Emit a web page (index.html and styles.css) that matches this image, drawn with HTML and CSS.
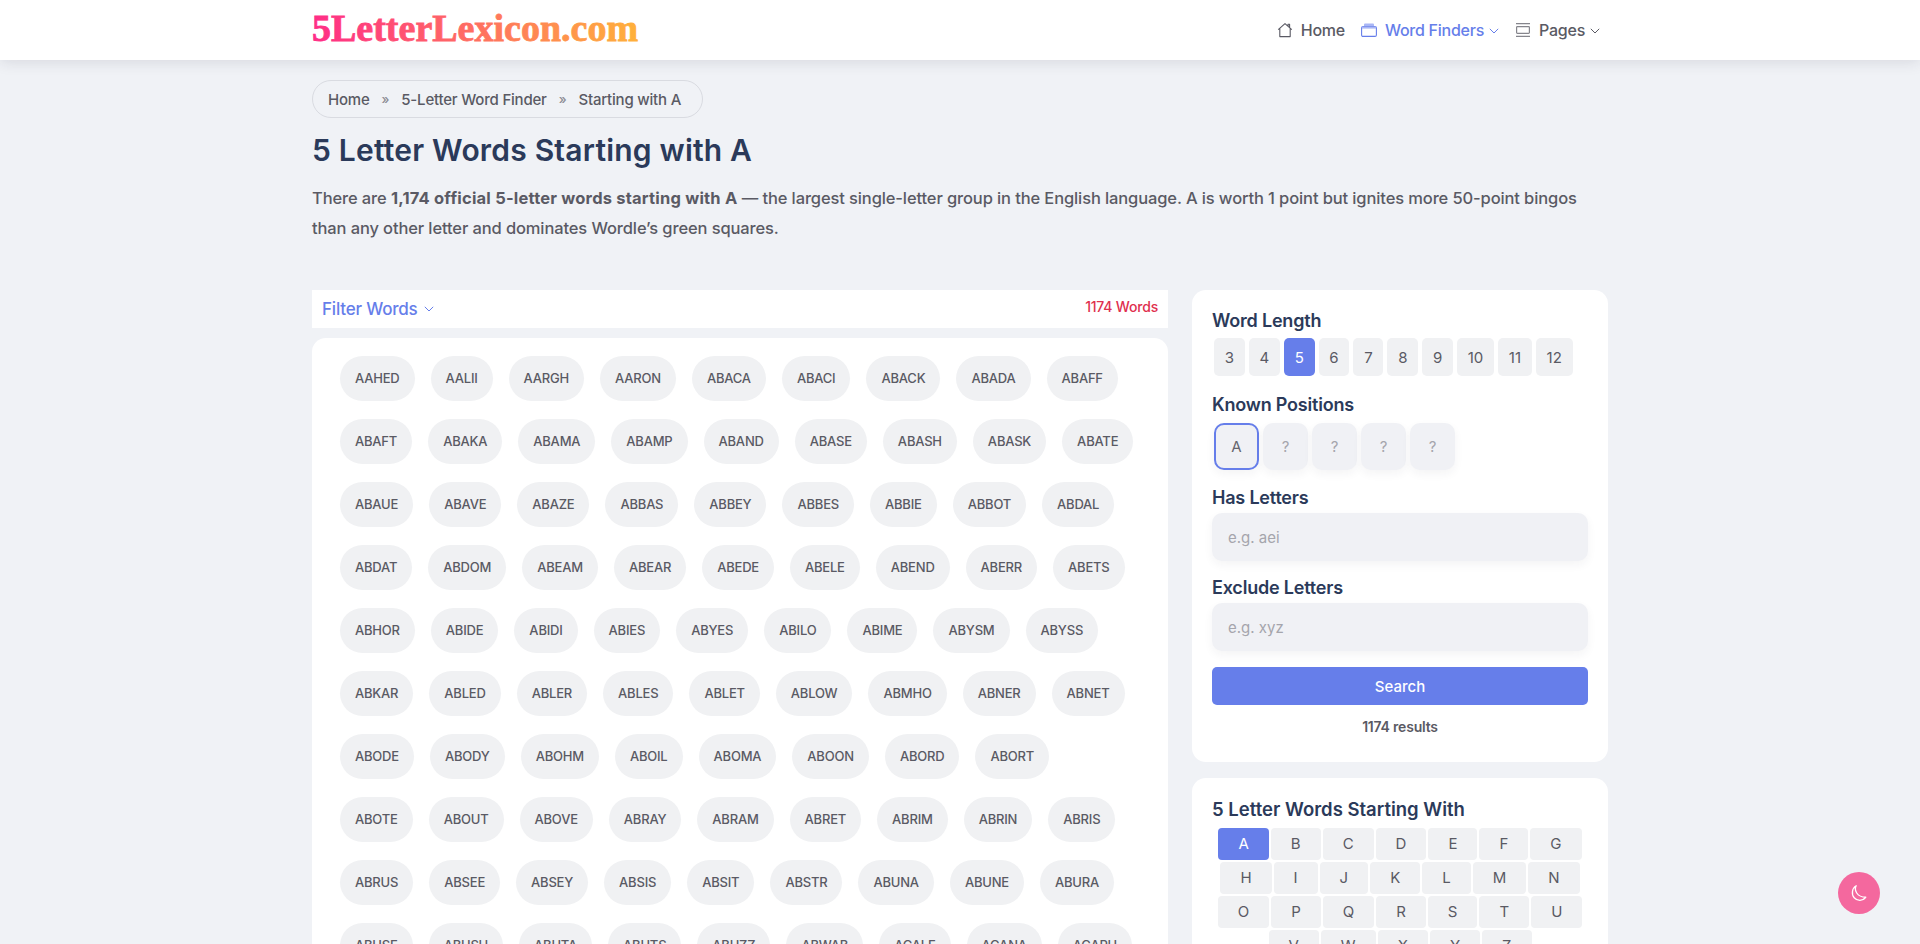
FILE: index.html
```html
<!DOCTYPE html>
<html lang="en">
<head>
    <meta charset="UTF-8">
    <meta name="viewport" content="width=device-width, initial-scale=1.0">
    <title>5 Letter Words Starting with A</title>
    <link rel="stylesheet" href="styles.css">
</head>
<body>
    <header class="site_header">
        <div class="container header_row">
            <a class="logo" href="#">
                <svg width="330" height="60">
                    <defs>
                        <linearGradient id="logoGrad" x1="0" y1="0" x2="1" y2="0">
                            <stop offset="0" stop-color="#ff2d87"/>
                            <stop offset="1" stop-color="#ffb13b"/>
                        </linearGradient>
                    </defs>
                    <text class="logo_text" x="0" y="41" fill="url(#logoGrad)" stroke="url(#logoGrad)" stroke-width="0.8">5LetterLexicon.com</text>
                </svg>
            </a>
            <nav class="main_nav">
                <a class="nav_link" href="#">
                    <svg class="nav_icon" width="16" height="16" viewBox="0 0 16 16" fill="none" stroke="currentColor" stroke-width="1.1" stroke-linejoin="round"><path d="M1.2 7.6 8 1.6l6.8 6M2.8 6.4v8.2h10.4V6.4M11 4V2.2h1.6v3.2"/></svg>
                    Home
                </a>
                <a class="nav_link active" href="#">
                    <svg class="nav_icon" width="16" height="16" viewBox="0 0 16 16" fill="none" stroke="currentColor" stroke-width="1.1"><path d="M3 4V2.400a1 1 0 0 1 1-1h8a1 1 0 0 1 1 1V4z" fill="#a9b6f5" stroke="none"/><rect x=".6" y="4.600" width="14.800" height="9.800" rx="1.400"/><path d="M1 5.600h14" stroke="#a9b6f5" stroke-width="2"/></svg>
                    Word Finders
                    <svg class="chevron" width="10" height="6" viewBox="0 0 10 6" fill="none" stroke="currentColor" stroke-width="1"><path d="M.8.8 5 5l4.200-4.200"/></svg>
                </a>
                <a class="nav_link" href="#">
                    <svg class="nav_icon" width="16" height="16" viewBox="0 0 16 16" fill="none" stroke="#85858c" stroke-width="1.200"><path d="M1 1.600h14M1 14.400h14"/><rect x="1.600" y="4.600" width="12.800" height="6.800" rx=".8"/></svg>
                    Pages
                    <svg class="chevron" width="10" height="6" viewBox="0 0 10 6" fill="none" stroke="currentColor" stroke-width="1"><path d="M.8.8 5 5l4.200-4.200"/></svg>
                </a>
            </nav>
        </div>
    </header>

    <main class="container">
        <div class="breadcrumb">
            <a href="#">Home</a><span class="sep">»</span><a href="#">5-Letter Word Finder</a><span class="sep">»</span><span>Starting with A</span>
        </div>
        <h1>5 Letter Words Starting with A</h1>
        <p class="intro">There are <strong>1,174 official 5-letter words starting with A</strong> — the largest single-letter group in the English language. A is worth 1 point but ignites more 50-point bingos than any other letter and dominates Wordle’s green squares.</p>

        <div class="content_grid">
            <section class="results">
                <div class="filter_bar">
                    <button class="filter_toggle">Filter Words
                        <svg width="10" height="6" viewBox="0 0 10 6" fill="none" stroke="currentColor" stroke-width="1"><path d="M.8.8 5 5l4.200-4.200"/></svg>
                    </button>
                    <span class="word_count">1174 Words</span>
                </div>
                <div class="word_list">
                    <a class="word">AAHED</a><a class="word">AALII</a><a class="word">AARGH</a><a class="word">AARON</a><a class="word">ABACA</a><a class="word">ABACI</a><a class="word">ABACK</a><a class="word">ABADA</a><a class="word">ABAFF</a>
                    <a class="word">ABAFT</a><a class="word">ABAKA</a><a class="word">ABAMA</a><a class="word">ABAMP</a><a class="word">ABAND</a><a class="word">ABASE</a><a class="word">ABASH</a><a class="word">ABASK</a><a class="word">ABATE</a>
                    <a class="word">ABAUE</a><a class="word">ABAVE</a><a class="word">ABAZE</a><a class="word">ABBAS</a><a class="word">ABBEY</a><a class="word">ABBES</a><a class="word">ABBIE</a><a class="word">ABBOT</a><a class="word">ABDAL</a>
                    <a class="word">ABDAT</a><a class="word">ABDOM</a><a class="word">ABEAM</a><a class="word">ABEAR</a><a class="word">ABEDE</a><a class="word">ABELE</a><a class="word">ABEND</a><a class="word">ABERR</a><a class="word">ABETS</a>
                    <a class="word">ABHOR</a><a class="word">ABIDE</a><a class="word">ABIDI</a><a class="word">ABIES</a><a class="word">ABYES</a><a class="word">ABILO</a><a class="word">ABIME</a><a class="word">ABYSM</a><a class="word">ABYSS</a>
                    <a class="word">ABKAR</a><a class="word">ABLED</a><a class="word">ABLER</a><a class="word">ABLES</a><a class="word">ABLET</a><a class="word">ABLOW</a><a class="word">ABMHO</a><a class="word">ABNER</a><a class="word">ABNET</a>
                    <a class="word">ABODE</a><a class="word">ABODY</a><a class="word">ABOHM</a><a class="word">ABOIL</a><a class="word">ABOMA</a><a class="word">ABOON</a><a class="word">ABORD</a><a class="word">ABORT</a>
                    <a class="word">ABOTE</a><a class="word">ABOUT</a><a class="word">ABOVE</a><a class="word">ABRAY</a><a class="word">ABRAM</a><a class="word">ABRET</a><a class="word">ABRIM</a><a class="word">ABRIN</a><a class="word">ABRIS</a>
                    <a class="word">ABRUS</a><a class="word">ABSEE</a><a class="word">ABSEY</a><a class="word">ABSIS</a><a class="word">ABSIT</a><a class="word">ABSTR</a><a class="word">ABUNA</a><a class="word">ABUNE</a><a class="word">ABURA</a>
                    <a class="word">ABUSE</a><a class="word">ABUSH</a><a class="word">ABUTA</a><a class="word">ABUTS</a><a class="word">ABUZZ</a><a class="word">ABWAB</a><a class="word">ACALE</a><a class="word">ACANA</a><a class="word">ACAPU</a>
                </div>
            </section>

            <aside class="sidebar">
                <div class="side_card">
                    <h3>Word Length</h3>
                    <div class="length_row">
                        <button class="length_btn">3</button><button class="length_btn">4</button><button class="length_btn active">5</button><button class="length_btn">6</button><button class="length_btn">7</button><button class="length_btn">8</button><button class="length_btn">9</button><button class="length_btn">10</button><button class="length_btn">11</button><button class="length_btn">12</button>
                    </div>
                    <h3>Known Positions</h3>
                    <div class="position_row">
                        <span class="position filled">A</span><span class="position">?</span><span class="position">?</span><span class="position">?</span><span class="position">?</span>
                    </div>
                    <h3>Has Letters</h3>
                    <input class="letter_input" type="text" placeholder="e.g. aei">
                    <h3>Exclude Letters</h3>
                    <input class="letter_input" type="text" placeholder="e.g. xyz">
                    <button class="search_btn">Search</button>
                    <p class="result_count">1174 results</p>
                </div>
                <div class="side_card">
                    <h3 class="alpha_title">5 Letter Words Starting With</h3>
                    <div class="alpha_grid">
                        <a class="alpha active">A</a><a class="alpha">B</a><a class="alpha">C</a><a class="alpha">D</a><a class="alpha">E</a><a class="alpha">F</a><a class="alpha">G</a>
                        <a class="alpha">H</a><a class="alpha">I</a><a class="alpha">J</a><a class="alpha">K</a><a class="alpha">L</a><a class="alpha">M</a><a class="alpha">N</a>
                        <a class="alpha">O</a><a class="alpha">P</a><a class="alpha">Q</a><a class="alpha">R</a><a class="alpha">S</a><a class="alpha">T</a><a class="alpha">U</a>
                        <a class="alpha">V</a><a class="alpha">W</a><a class="alpha">X</a><a class="alpha">Y</a><a class="alpha">Z</a>
                    </div>
                </div>
            </aside>
        </div>
    </main>

    <button class="theme_toggle" aria-label="Toggle theme">
        <svg width="20" height="20" viewBox="0 0 20 20" fill="none" stroke="#fff" stroke-width="1.300" stroke-linejoin="round"><path d="M7.200 2.800C5 6.800 7.600 14.200 16.800 14.200 13.800 18.400 8 18 5.200 14.800 2.200 11.400 3 5 7.200 2.800z"/></svg>
    </button>
</body>
</html>
```

FILE: styles.css
```css
html, body {
    height: 100%;
    overflow: hidden;
}

body {
    margin: 0;
    font-family: Inter, "Noto Sans", sans-serif;
    background-color: #f0f2f6;
    color: #5a5a64;
}

a {
    color: inherit;
    text-decoration: none;
}

button, input {
    font-family: inherit;
}

.container {
    width: 1296px;
    margin: 0 auto;
}

/* header */
.site_header {
    height: 60px;
    background: #fff;
    box-shadow: 0 2px 14px rgba(30, 35, 60, 0.12);
}

.header_row {
    height: 100%;
    display: flex;
    align-items: center;
    justify-content: space-between;
}

.logo {
    display: block;
    height: 60px;
}

.logo_text {
    font-family: "Liberation Serif", serif;
    font-weight: bold;
    font-size: 38px;
}

.main_nav {
    display: flex;
    align-items: center;
    gap: 16px;
    padding-right: 8px;
}

.nav_link {
    display: flex;
    align-items: center;
    font-size: 16px;
    font-weight: 500;
    letter-spacing: -0.25px;
}

.nav_link.active {
    color: #667eea;
}

.nav_icon {
    margin-right: 8px;
}

.chevron {
    margin-left: 5px;
    margin-top: 2px;
}

/* top of the page */
.breadcrumb {
    display: inline-flex;
    align-items: center;
    height: 36px;
    margin-top: 20px;
    padding: 0 21px 0 15px;
    border: 1px solid #d9dbe1;
    border-radius: 19px;
    font-size: 15px;
    font-weight: 500;
    letter-spacing: -0.2px;
}

.sep {
    margin: 0 12px;
    color: #8b8b93;
    font-size: 13px;
}

h1 {
    margin: 12px 0 0;
    font-size: 30px;
    line-height: 40px;
    font-weight: 600;
    color: #2b3a5a;
    letter-spacing: 0.2px;
}

.intro {
    margin: 13px 0 0;
    font-size: 16.5px;
    line-height: 30px;
    font-weight: 500;
    letter-spacing: -0.12px;
}

.intro strong {
    font-weight: 700;
    letter-spacing: 0.2px;
}

.content_grid {
    display: grid;
    grid-template-columns: 856px 416px;
    gap: 24px;
    margin-top: 47px;
}

/* word list */
.filter_bar {
    display: flex;
    justify-content: space-between;
    height: 38px;
    padding: 0 10px;
    background: #fff;
}

.filter_toggle {
    display: flex;
    align-items: center;
    gap: 6px;
    padding: 0;
    border: none;
    background: none;
    color: #667eea;
    font-size: 17px;
    font-weight: 500;
    letter-spacing: -0.2px;
}

.word_count {
    color: #e0304e;
    font-size: 14px;
    font-weight: 500;
    line-height: 34px;
    letter-spacing: -0.2px;
}

.word_list {
    display: flex;
    flex-wrap: wrap;
    gap: 18px 16px;
    margin-top: 10px;
    padding: 18px 34px 18px 28px;
    background: #fff;
    border-radius: 14px;
}

.word {
    height: 45px;
    padding: 0 15px;
    border-radius: 23px;
    background: #f0f1f3;
    font-size: 13px;
    font-weight: 500;
    line-height: 45px;
    letter-spacing: -0.2px;
}

/* sidebar */
.side_card {
    padding: 20px;
    margin-bottom: 16px;
    background: #fff;
    border-radius: 14px;
}

.side_card h3 {
    margin: 0;
    font-size: 18px;
    line-height: 22px;
    font-weight: 600;
    color: #2b3a5a;
    letter-spacing: -0.2px;
}

.length_row {
    display: flex;
    gap: 4px;
    margin: 6px 0 18px 2px;
}

.length_btn {
    height: 38px;
    padding: 0 10.75px;
    border: none;
    border-radius: 5px;
    background: #f0f1f3;
    color: #5a5a64;
    font-size: 15px;
}

.length_btn.active {
    background: #667eea;
    color: #fff;
}

.position_row {
    display: flex;
    gap: 4px;
    margin: 7px 0 17px 2px;
}

.position {
    width: 45px;
    height: 47px;
    box-sizing: border-box;
    display: flex;
    align-items: center;
    justify-content: center;
    border-radius: 10px;
    background: #f0f1f5;
    color: #a5a5ac;
    font-size: 15px;
    box-shadow: 0 4px 10px rgba(30, 35, 60, 0.05);
}

.position.filled {
    border: 2px solid #667eea;
    color: #66666e;
}

.letter_input {
    display: block;
    width: 100%;
    height: 48px;
    box-sizing: border-box;
    margin: 4px 0 16px;
    padding: 0 16px;
    border: none;
    border-radius: 10px;
    background: #f0f1f5;
    font-size: 15px;
    box-shadow: 0 4px 10px rgba(30, 35, 60, 0.05);
}

.letter_input::placeholder {
    color: #a5a5ac;
}

.search_btn {
    display: block;
    width: 100%;
    height: 38px;
    margin-top: 16px;
    border: none;
    border-radius: 5px;
    background: #667eea;
    color: #fff;
    font-size: 15px;
    font-weight: 500;
}

.result_count {
    margin: 12px 0 5px;
    text-align: center;
    font-size: 14px;
    line-height: 20px;
    font-weight: 600;
    letter-spacing: -0.2px;
}

.side_card .alpha_title {
    margin-bottom: 8px;
    font-size: 18.5px;
    letter-spacing: 0;
}

.alpha_grid {
    display: flex;
    flex-wrap: wrap;
    justify-content: center;
    gap: 2px;
}

.alpha {
    height: 32px;
    padding: 0 20px;
    border-radius: 4px;
    background: #f0f1f3;
    font-size: 15px;
    line-height: 32px;
}

.alpha.active {
    background: #667eea;
    color: #fff;
}

.theme_toggle {
    position: fixed;
    right: 40px;
    bottom: 30px;
    width: 42px;
    height: 42px;
    display: flex;
    align-items: center;
    justify-content: center;
    padding: 0;
    border: none;
    border-radius: 50%;
    background: #f4689e;
}
```
